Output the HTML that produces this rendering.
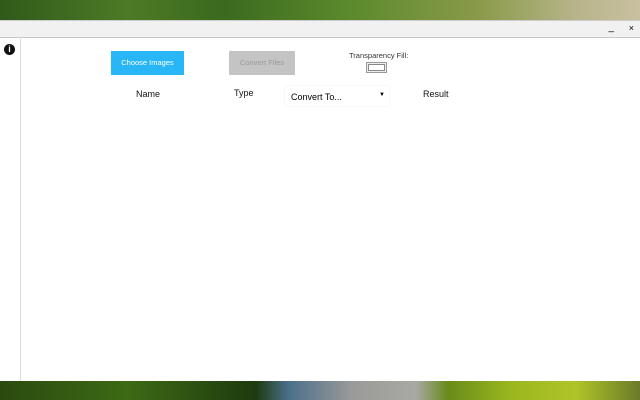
<!DOCTYPE html>
<html><head><style>
body{margin:0;width:640px;height:400px;overflow:hidden;font-family:"Liberation Sans",sans-serif;position:relative;background:#fff}
.top{position:absolute;left:0;top:0;width:640px;height:20px;background:linear-gradient(90deg,#2f5a1a 0%,#4d7a26 20%,#3b6a1e 35%,#5c8a2c 55%,#8a9a4a 75%,#b7b48a 90%,#c9c0a0 100%)}
.bar{position:absolute;left:0;top:20px;width:640px;height:16px;background:#f1f1f1;border-top:1px solid #ccc;border-bottom:1px solid #c8c8c8}
.bot{position:absolute;left:0;top:381px;width:640px;height:19px;background:linear-gradient(90deg,#2a4a10 0%,#3d6a14 20%,#1d3a0e 40%,#4a6f8a 45%,#9a9a98 55%,#a8a8a4 65%,#6a8a1a 70%,#9ab81e 80%,#b0c428 90%,#6a7a2a 100%)}
.side{position:absolute;left:20px;top:37px;width:1px;height:344px;background:#ddd}
.t{position:absolute;font-size:9px;color:#111}
</style></head><body>
<div class="top"></div>
<div class="bar"><span style="position:absolute;right:26px;top:1px;font-size:10px">_</span><span style="position:absolute;right:6px;top:2px;font-size:9px">×</span></div>
<div class="side"></div>
<div style="position:absolute;left:4px;top:44px;width:11px;height:11px;border-radius:50%;background:#111;color:#fff;font-size:9px;font-weight:bold;text-align:center;line-height:11px">i</div>
<div style="position:absolute;left:111px;top:51px;width:73px;height:24px;background:#29b6f6;color:#fff;font-size:7.5px;text-align:center;line-height:24px">Choose Images</div>
<div style="position:absolute;left:229px;top:51px;width:66px;height:24px;background:#c4c4c4;color:#999;font-size:7.5px;text-align:center;line-height:24px">Convert Files</div>
<div class="t" style="left:349px;top:51px;font-size:7.5px;color:#333">Transparency Fill:</div>
<div style="position:absolute;left:366px;top:62px;width:19px;height:9px;border:1px solid #999;background:#eee"><div style="margin:1px;height:5px;border:1px solid #888;background:#fff"></div></div>
<div class="t" style="left:136px;top:89px">Name</div>
<div class="t" style="left:234px;top:88px">Type</div>
<div style="position:absolute;left:285px;top:86px;width:104px;height:20px;background:#fff;box-shadow:0 0 1px #ddd"><span style="position:absolute;left:6px;top:6px;font-size:9px">Convert To...</span><span style="position:absolute;right:4px;top:6px;font-size:6px">▼</span></div>
<div class="t" style="left:423px;top:89px">Result</div>
<div class="bot"></div>
</body></html>
